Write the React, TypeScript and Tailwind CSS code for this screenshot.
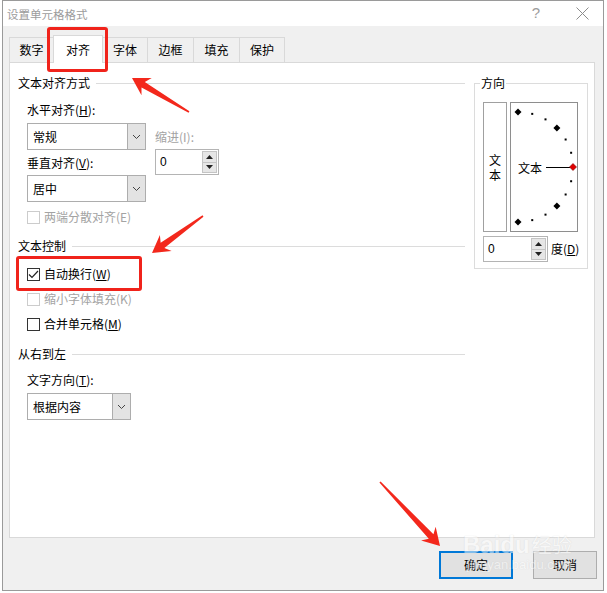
import type { ReactNode } from 'react';

const tabs = ['数字', '对齐', '字体', '边框', '填充', '保护'];
const tabWidths = ['w-[45px]', 'w-[50px]', 'w-[46px]', 'w-[47px]', 'w-[47px]', 'w-[46px]'];

function arrowPoints(sx: number, sy: number, tx: number, ty: number) {
  const dx = tx - sx;
  const dy = ty - sy;
  const len = Math.hypot(dx, dy);
  const ux = dx / len;
  const uy = dy / len;
  const nx = -uy;
  const ny = ux;
  const L = 17;
  const W = 10;
  const w = 3.2;
  const jx = tx - ux * (L - 4);
  const jy = ty - uy * (L - 4);
  const bx = tx - ux * L;
  const by = ty - uy * L;
  const pts = [
    [sx + nx * 0.8, sy + ny * 0.8],
    [jx + nx * w, jy + ny * w],
    [bx + nx * W, by + ny * W],
    [tx, ty],
    [bx - nx * W, by - ny * W],
    [jx - nx * w, jy - ny * w],
    [sx - nx * 0.8, sy - ny * 0.8],
  ];
  return pts.map((p) => p.join(',')).join(' ');
}

function Acc({ k }: { k: string }) {
  return (
    <>
      (<u>{k}</u>)
    </>
  );
}

function GroupTitle({ children }: { children: ReactNode }) {
  return (
    <div className="flex items-center h-[16px] leading-[16px]">
      <span>{children}</span>
      <div className="flex-1 h-px bg-[#dcdcdc] ml-[6px]" />
    </div>
  );
}

function Chevron() {
  return (
    <svg width="9" height="6" viewBox="0 0 9 6">
      <path d="M1 1 L4.5 4.5 L8 1" fill="none" stroke="#444" strokeWidth="1" />
    </svg>
  );
}

function Select({ value, width }: { value: string; width: string }) {
  return (
    <div className={`${width} h-[27px] flex border border-[#adadad] bg-white`}>
      <div className="flex-1 flex items-center pl-[5px] leading-[16px]">{value}</div>
      <div className="w-[18px] flex items-center justify-center bg-[#e3e3e3] border-l border-[#adadad]">
        <Chevron />
      </div>
    </div>
  );
}

function Spin({ width }: { width: string }) {
  return (
    <div className={`${width} h-[26px] flex border border-[#b4b4b4] bg-white`}>
      <div className="flex-1 flex items-center pl-[4px] font-['Liberation_Sans',sans-serif] text-[12px]">0</div>
      <div className="w-[16px] flex flex-col py-[1px] pr-[1px]">
        <div className="flex-1 flex items-center justify-center bg-[#e6e6e6] border border-[#c4c4c4]">
          <svg width="7" height="4" viewBox="0 0 7 4">
            <path d="M0 4 L3.5 0 L7 4 Z" fill="#222" />
          </svg>
        </div>
        <div className="flex-1 flex items-center justify-center bg-[#e6e6e6] border border-t-0 border-[#c4c4c4]">
          <svg width="7" height="4" viewBox="0 0 7 4">
            <path d="M0 0 L3.5 4 L7 0 Z" fill="#222" />
          </svg>
        </div>
      </div>
    </div>
  );
}

function Check({ label, checked, disabled }: { label: ReactNode; checked?: boolean; disabled?: boolean }) {
  return (
    <div className={`flex items-center h-[16px] leading-[16px] ${disabled ? 'text-[#a3a3a3]' : ''}`}>
      <div
        className={`w-[13px] h-[13px] border ${disabled ? 'border-[#cccccc]' : 'border-[#333333]'} bg-white flex items-center justify-center`}
      >
        {checked && (
          <svg width="11" height="9" viewBox="0 0 11 9">
            <path d="M1 4.5 L4 7.5 L10 1" fill="none" stroke="#222" strokeWidth="1.2" />
          </svg>
        )}
      </div>
      <span className="ml-[4px]">{label}</span>
    </div>
  );
}

function Dial() {
  const cx = 8;
  const cy = 65;
  const r = 55;
  const marks = [];
  for (let i = 0; i <= 12; i++) {
    const a = ((-90 + i * 15) * Math.PI) / 180;
    const x = cx + r * Math.cos(a);
    const y = cy + r * Math.sin(a);
    const big = i % 3 === 0;
    if (i === 6) continue;
    marks.push(
      big ? (
        <path key={i} d={`M${x} ${y - 3.5} L${x + 3.5} ${y} L${x} ${y + 3.5} L${x - 3.5} ${y} Z`} fill="#000" />
      ) : (
        <rect key={i} x={x - 1} y={y - 1} width="2" height="2" fill="#000" />
      )
    );
  }
  return (
    <div className="relative w-[68px] h-[130px] ml-[3px] border border-[#8e8e8e] bg-white">
      <svg className="absolute left-[-1px] top-[-1px]" width="68" height="130" viewBox="0 0 68 130">
        {marks}
        <line x1="36" y1="65.5" x2="60" y2="65.5" stroke="#000" strokeWidth="1" />
        <path d="M63 61.5 L66.5 65 L63 68.5 L59.5 65 Z" fill="#e00000" stroke="#7a0000" strokeWidth="0.6" />
      </svg>
      <span className="absolute left-[7px] top-[57px] leading-[16px]">文本</span>
    </div>
  );
}

export default function App() {
  return (
    <div className="relative w-[607px] h-[593px] bg-white overflow-hidden text-[12px] text-black font-['Noto_Sans_CJK_SC',sans-serif]">
      <div className="ml-[2px] w-[602px] h-[591px] border border-[#9a9a9a] flex flex-col bg-[#f0f0f0]">
        {/* title bar */}
        <div className="h-[25px] bg-white flex items-center justify-between pl-[4px] pr-[14px] text-[#9c9c9c]">
          <span className="text-[11.5px] leading-[16px]">设置单元格格式</span>
          <div className="flex items-center">
            <span className="font-['Liberation_Sans',sans-serif] text-[15px] mr-[36px]">?</span>
            <svg width="13" height="13" viewBox="0 0 13 13">
              <path d="M0.5 0.5 L12.5 12.5 M12.5 0.5 L0.5 12.5" stroke="#8c8c8c" strokeWidth="1" />
            </svg>
          </div>
        </div>

        {/* body */}
        <div className="flex-1 flex flex-col pt-[9px] pl-[6px]">
          <div className="flex items-end">
            {tabs.map((t, i) =>
              i === 1 ? (
                <div
                  key={t}
                  className={`${tabWidths[i]} -ml-px h-[28px] -mb-px relative z-10 bg-white border border-b-0 border-[#d9d9d9] flex items-center justify-center leading-[16px]`}
                >
                  {t}
                </div>
              ) : (
                <div
                  key={t}
                  className={`${tabWidths[i]} ${i > 0 ? '-ml-px' : ''} h-[25px] bg-[#f0f0f0] border border-b-0 border-[#d9d9d9] flex items-center justify-center leading-[16px]`}
                >
                  {t}
                </div>
              )
            )}
          </div>

          {/* panel */}
          <div className="w-[586px] h-[476px] bg-white border border-[#d9d9d9] flex pt-[12px] pl-[8px]">
            <div className="w-[447px] flex flex-col">
              <GroupTitle>文本对齐方式</GroupTitle>
              <div className="pl-[9px] flex flex-col">
                <div className="mt-[11px] h-[16px] leading-[16px]">
                  水平对齐<Acc k="H" />:
                </div>
                <div className="flex mt-[5px]">
                  <div className="flex flex-col">
                    <Select value="常规" width="w-[119px]" />
                    <div className="mt-[5px] h-[16px] leading-[16px]">
                      垂直对齐<Acc k="V" />:
                    </div>
                    <div className="mt-[4px]">
                      <Select value="居中" width="w-[119px]" />
                    </div>
                  </div>
                  <div className="ml-[9px] flex flex-col pt-[6px]">
                    <div className="h-[16px] leading-[16px] text-[#a3a3a3]">缩进(I):</div>
                    <div className="mt-[4px]">
                      <Spin width="w-[64px]" />
                    </div>
                  </div>
                </div>
                <div className="mt-[7px]">
                  <Check label="两端分散对齐(E)" disabled />
                </div>
              </div>

              <div className="mt-[13px]">
                <GroupTitle>文本控制</GroupTitle>
              </div>
              <div className="pl-[9px] flex flex-col">
                <div className="mt-[12px]">
                  <Check
                    label={
                      <>
                        自动换行<Acc k="W" />
                      </>
                    }
                    checked
                  />
                </div>
                <div className="mt-[9px]">
                  <Check label="缩小字体填充(K)" disabled />
                </div>
                <div className="mt-[9px]">
                  <Check
                    label={
                      <>
                        合并单元格<Acc k="M" />
                      </>
                    }
                  />
                </div>
              </div>

              <div className="mt-[14px]">
                <GroupTitle>从右到左</GroupTitle>
              </div>
              <div className="pl-[9px] flex flex-col">
                <div className="mt-[10px] h-[16px] leading-[16px]">
                  文字方向<Acc k="T" />:
                </div>
                <div className="mt-[5px]">
                  <Select value="根据内容" width="w-[104px]" />
                </div>
              </div>
            </div>

            {/* orientation */}
            <fieldset className="ml-[9px] w-[114px] h-[194px] border border-[#dcdcdc] pl-[5px]">
              <legend className="px-[1px] leading-[16px]">方向</legend>
              <div className="ml-[3px] mt-[11px] flex">
                <div className="w-[24px] h-[130px] border border-[#a0a0a0] flex flex-col items-center justify-center leading-[15px]">
                  <span>文</span>
                  <span>本</span>
                </div>
                <Dial />
              </div>
              <div className="ml-[3px] mt-[4px] flex items-center">
                <Spin width="w-[65px]" />
                <span className="ml-[3px] leading-[16px]">
                  度<Acc k="D" />
                </span>
              </div>
            </fieldset>
          </div>

          {/* buttons */}
          <div className="flex justify-end pr-[6px] mt-[13px]">
            <button className="w-[74px] h-[28px] bg-[#e1e1e1] border-2 border-[#0078d7] leading-[16px]">确定</button>
            <button className="w-[64px] h-[28px] ml-[20px] bg-[#e1e1e1] border border-[#adadad] leading-[16px]">取消</button>
          </div>
        </div>
      </div>

      {/* watermark */}
      <div className="absolute left-[463px] top-[532px] pointer-events-none text-white opacity-50 [text-shadow:0_0_1px_#bdbdbd]">
        <div className="flex items-end leading-[26px]">
          <span className="font-['Liberation_Sans',sans-serif] font-bold text-[24px]">Baidu</span>
          <span className="text-[20px] ml-[2px]">经验</span>
        </div>
        <div className="font-['Liberation_Sans',sans-serif] text-[13px] leading-[14px] ml-[4px]">jingyan.baidu.com</div>
      </div>

      {/* annotations */}
      <div className="absolute left-[47px] top-[27px] w-[61px] h-[45px] border-[3px] border-[#f0231b] rounded-[3px] pointer-events-none z-20" />
      <div className="absolute left-[16px] top-[256px] w-[126px] h-[35px] border-[3px] border-[#f0231b] rounded-[3px] pointer-events-none z-20" />
      <svg className="absolute inset-0 pointer-events-none z-20" width="607" height="593" viewBox="0 0 607 593">
        <polygon points={arrowPoints(189, 112, 132, 78)} fill="#f3281c" />
        <polygon points={arrowPoints(203, 216, 152, 253)} fill="#f3281c" />
        <polygon points={arrowPoints(380, 482, 440, 546)} fill="#f3281c" />
      </svg>
    </div>
  );
}
